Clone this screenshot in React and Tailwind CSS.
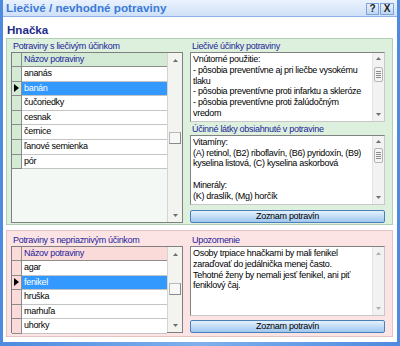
import React from 'react';

const healing = ['ananás', 'banán', 'čučoriedky', 'cesnak', 'černice', 'ľanové semienka', 'pór'];
const harmful = ['agar', 'fenikel', 'hruška', 'marhuľa', 'uhorky'];

const themes = {
  green: {
    panel: 'bg-[#dcf0dd] border-[#b3cfb6]',
    cell: 'bg-[#d3ebd5]',
    body: 'bg-[#f4f8f4] h-[171px]',
    thumb: 'mt-[65px]',
  },
  pink: {
    panel: 'bg-[#fde4e4] border-[#e2c2c2]',
    cell: 'bg-[#fbdada]',
    body: 'bg-[#fbf6f6] h-[87px]',
    thumb: 'mt-[22px]',
  },
};

const Arrow = ({ up, light }) => (
  <svg width="5" height="3" viewBox="0 0 5 3">
    <path d={up ? 'M0 3 L2.5 0 L5 3 Z' : 'M0 0 L2.5 3 L5 0 Z'} fill={light ? '#b0b0b0' : '#6e6e6e'} />
  </svg>
);

const SelMark = () => (
  <svg width="5" height="8" viewBox="0 0 5 8">
    <path d="M0 0 L5 4 L0 8 Z" fill="#000" />
  </svg>
);

// scrollbar of the data grid
const GridScroll = ({ thumb }) => (
  <div className="w-[15px] shrink-0 flex flex-col border-l border-[#d4d4d4] bg-[#f3f3ef]">
    <div className="h-[14px] flex items-center justify-center">
      <Arrow up />
    </div>
    <div className={`h-[12px] mx-[1px] bg-[#f7f7f7] border border-[#b8b8b8] border-b-[#8a8a8a] border-r-[#8a8a8a] ${thumb}`} />
    <div className="flex-1" />
    <div className="h-[14px] flex items-center justify-center">
      <Arrow />
    </div>
  </div>
);

// scrollbar of a memo box
const MemoScroll = ({ thumb, disabled }) => (
  <div className="w-[12px] shrink-0 flex flex-col bg-[#f2f2f2] border-l border-[#e4e4e4]">
    <div className="h-[12px] flex items-center justify-center">
      <Arrow up light={disabled} />
    </div>
    {thumb && (
      <div className={`h-[15px] mx-[1px] rounded-[2px] bg-[#f4f4f4] border border-[#b4b4b4] flex flex-col items-center justify-center gap-[1px] ${thumb}`}>
        <div className="w-[5px] h-px bg-[#8c8c8c]" />
        <div className="w-[5px] h-px bg-[#8c8c8c]" />
        <div className="w-[5px] h-px bg-[#8c8c8c]" />
        <div className="w-[5px] h-px bg-[#8c8c8c]" />
      </div>
    )}
    <div className="flex-1" />
    <div className="h-[12px] flex items-center justify-center">
      <Arrow light={disabled} />
    </div>
  </div>
);

const GridList = ({ items, selected, theme }) => {
  const t = themes[theme];
  return (
    <div className={`flex border border-[#7f7f7f] ${t.body}`}>
      <div className="flex-1 min-w-0 flex flex-col">
        <div className="flex h-[14px]">
          <div className={`w-[10px] shrink-0 border-r border-b border-[#8c8c8c] ${t.cell}`} />
          <div className={`flex-1 border-b border-[#8c8c8c] pl-[2px] leading-[13px] text-[#24249c] ${t.cell}`}>
            Názov potraviny
          </div>
        </div>
        {items.map((item) => {
          const isSel = item === selected;
          return (
            <div key={item} className="flex h-[14.6px]">
              <div className={`w-[10px] shrink-0 border-r border-b border-[#8c8c8c] flex items-center justify-center ${t.cell}`}>
                {isSel && <SelMark />}
              </div>
              <div
                className={`flex-1 border-b border-[#c4c4c4] pl-[2px] leading-[13.6px] whitespace-nowrap ${
                  isSel ? 'bg-[#3399ff] text-white' : 'bg-white text-black'
                }`}
              >
                {item}
              </div>
            </div>
          );
        })}
      </div>
      <GridScroll thumb={t.thumb} />
    </div>
  );
};

const Memo = ({ lines, thumb, disabled }) => (
  <div className="h-[70px] flex bg-white border border-[#828282] border-r-[#c8c8c8] border-b-[#c8c8c8]">
    <div className="flex-1 min-w-0 pl-[2px] pt-[1px] leading-[10.8px] text-black whitespace-pre overflow-hidden">
      {lines.map((l, i) => (
        <div key={i} className="h-[10.8px]">{l}</div>
      ))}
    </div>
    <MemoScroll thumb={thumb} disabled={disabled} />
  </div>
);

const ListButton = () => (
  <button className="h-[13px] w-full rounded-[2px] border border-[#4a7fb8] bg-gradient-to-b from-[#e4f1fd] to-[#9fc8f0] text-black leading-[11px] text-center">
    Zoznam potravín
  </button>
);

const Label = ({ children, className }) => (
  <div className={`text-[#23239a] whitespace-nowrap pl-[2px] ${className}`}>{children}</div>
);

export default function App() {
  return (
    <div className="w-[400px] h-[346px] flex flex-col bg-gradient-to-r from-[#4d8ae0] via-[#7fb0ec] to-[#4d8ae0] px-[3px] pb-[4px] text-[9px] tracking-[-0.3px] font-['Liberation_Sans',Arial,sans-serif] overflow-hidden">
      {/* Title bar */}
      <div className="h-[17px] flex items-center justify-between bg-gradient-to-b from-[#eaf2fd] to-[#cfe1f7] border-b border-[#8fb3e6]">
        <span className="pl-[3px] text-[11.7px] tracking-normal font-bold text-[#3a7ad6] leading-none">
          Liečivé / nevhodné potraviny
        </span>
        <div className="flex gap-[1px] pr-[3px] pt-[1px]">
          <div className="w-[13px] h-[12px] flex items-center justify-center bg-gradient-to-b from-[#e9f2fd] to-[#bcd6f5] border border-[#7ea3d8] text-[10px] tracking-normal font-bold text-[#202020] leading-none">
            ?
          </div>
          <div className="w-[14px] h-[12px] flex items-center justify-center bg-gradient-to-b from-[#e9f2fd] to-[#bcd6f5] border border-[#7ea3d8] text-[10px] tracking-normal font-bold text-[#202020] leading-none">
            X
          </div>
        </div>
      </div>

      {/* Body */}
      <div className="flex-1 bg-white flex flex-col pt-[6px] pl-[3px] pr-[4px]">
        <div className="h-[14px] mb-[1px] pl-[1px] text-[11.6px] tracking-normal leading-[14px] font-bold text-[#1e2a8c]">
          Hnačka
        </div>

        {/* Healing foods */}
        <div className={`h-[187px] flex border pt-[3px] pb-[1px] pl-[4px] pr-[7px] gap-[7px] ${themes.green.panel}`}>
          <div className="w-[172px] shrink-0 flex flex-col">
            <Label className="h-[10px] leading-[9px]">Potraviny s liečivým účinkom</Label>
            <GridList items={healing} selected="banán" theme="green" />
          </div>
          <div className="w-[195px] shrink-0 min-w-0 flex flex-col">
            <Label className="h-[10px] leading-[9px]">Liečivé účinky potraviny</Label>
            <Memo
              thumb="mt-[2px]"
              lines={[
                'Vnútorné použitie:',
                '- pôsobia preventívne aj pri liečbe vysokému',
                'tlaku',
                '- pôsobia preventívne proti infarktu a skleróze',
                '- pôsobia preventívne proti žalúdočným',
                'vredom',
              ]}
            />
            <Label className="h-[13px] leading-[14px]">Účinné látky obsiahnuté v potravine</Label>
            <Memo
              thumb="mt-[0px]"
              lines={[
                'Vitamíny:',
                '(A) retinol, (B2) riboflavín, (B6) pyridoxín, (B9)',
                'kyselina listová, (C) kyselina askorbová',
                ' ',
                'Minerály:',
                '(K) draslík, (Mg) horčík',
              ]}
            />
            <div className="mt-[5px]">
              <ListButton />
            </div>
          </div>
        </div>

        {/* Harmful foods */}
        <div className={`mt-[5px] h-[107px] flex border pt-[4px] pb-[3px] pl-[4px] pr-[7px] gap-[7px] ${themes.pink.panel}`}>
          <div className="w-[172px] shrink-0 flex flex-col">
            <Label className="h-[11px] leading-[11px]">Potraviny s nepriaznivým účinkom</Label>
            <GridList items={harmful} selected="fenikel" theme="pink" />
          </div>
          <div className="w-[195px] shrink-0 min-w-0 flex flex-col">
            <Label className="h-[11px] leading-[11px]">Upozornenie</Label>
            <Memo
              disabled
              lines={[
                'Osoby trpiace hnačkami by mali fenikel',
                'zaraďovať do jedálnička menej často.',
                'Tehotné ženy by nemali jesť fenikel, ani piť',
                'feniklový čaj.',
              ]}
            />
            <div className="mt-[4px]">
              <ListButton />
            </div>
          </div>
        </div>
      </div>
    </div>
  );
}
